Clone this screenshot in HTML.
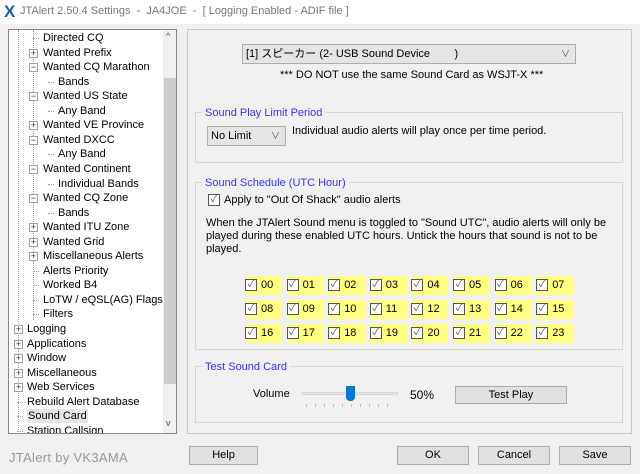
<!DOCTYPE html><html><head><style>
*{margin:0;padding:0;box-sizing:border-box}
body{width:640px;height:474px;background:#f0f0f0;font-family:"Liberation Sans","Noto Sans CJK JP",sans-serif;font-size:11px;color:#000;position:relative;overflow:hidden}
.a{position:absolute;white-space:nowrap}
.tb{position:absolute;left:0;top:0;width:640px;height:24px;background:#fff}
.tree{position:absolute;left:8px;top:29px;width:169px;height:405px;background:#fff;border:1px solid #828790;overflow:hidden}
.sb{position:absolute;left:154px;top:0;width:14px;height:403px;background:#f0f0f0}
.th{position:absolute;left:1px;top:48px;width:12px;height:306px;background:#cdcdcd}
.ti{position:absolute;height:14px;line-height:14px}
.pb{position:absolute;width:9px;height:9px;border:1px solid #a0a0a0;background:#fff;font-size:9px;line-height:7px;text-align:center;color:#333}
.grp{position:absolute;border:1px solid #d5d5d5}
.gl{position:absolute;background:#f0f0f0;color:#3333ff;padding:0 3px;font-size:11px}
.btn{position:absolute;border:1px solid #adadad;background:#e1e1e1;text-align:center;line-height:17px}
.cell{position:absolute;width:37px;height:19px;background:#ffff80;font-size:11px;line-height:19px}
.cb{position:absolute;width:12px;height:12px;border:1px solid #555;background:#fff;font-size:10px;line-height:10px;text-align:center;color:#555}
.dl{position:absolute;border-left:1px dotted #a0a0a0}
.dh{position:absolute;border-top:1px dotted #a0a0a0;width:6px}
</style></head><body>
<div class="tb"></div>
<div class="a" style="left:4px;top:2px;font-size:17px;color:#1a5fb4;font-weight:bold">X</div>
<div class="a" style="left:20px;top:5px;color:#777;font-size:11px">JTAlert 2.50.4 Settings &nbsp;- &nbsp;JA4JOE &nbsp;- &nbsp;[ Logging Enabled - ADIF file ]</div>
<div class="tree">
<div class="dl" style="left:9px;top:0;height:400px"></div>
<div class="dl" style="left:24px;top:0;height:290px"></div>
<div id="items"></div>
<div class="sb"><div class="th"></div><div class="a" style="left:3px;top:1px;font-size:9px;color:#555">^</div><div class="a" style="left:3px;top:388px;font-size:9px;color:#555">v</div></div>
</div>
<script>
var it=[[2,"Directed CQ",0],[2,"Wanted Prefix","+"],[2,"Wanted CQ Marathon","-"],[3,"Bands",0],[2,"Wanted US State","-"],[3,"Any Band",0],[2,"Wanted VE Province","+"],[2,"Wanted DXCC","-"],[3,"Any Band",0],[2,"Wanted Continent","-"],[3,"Individual Bands",0],[2,"Wanted CQ Zone","-"],[3,"Bands",0],[2,"Wanted ITU Zone","+"],[2,"Wanted Grid","+"],[2,"Miscellaneous Alerts","+"],[2,"Alerts Priority",0],[2,"Worked B4",0],[2,"LoTW / eQSL(AG) Flags",0],[2,"Filters",0],[1,"Logging","+"],[1,"Applications","+"],[1,"Window","+"],[1,"Miscellaneous","+"],[1,"Web Services","+"],[1,"Rebuild Alert Database",0],[1,"Sound Card",0],[1,"Station Callsign",0]];
var h="";
for(var i=0;i<it.length;i++){var y=1+i*14.55,l=it[i][0];var x=(l==1?27:l==2?43:58)-9;
var bx=(l==1?14:l==2?29:0)-9;
if(it[i][2])h+='<div class="pb" style="left:'+bx+'px;top:'+(y+3)+'px">'+(it[i][2]=="+"?"+":"−")+'</div>';
else h+='<div class="dh" style="left:'+(x-10)+'px;top:'+(y+7)+'px"></div>';
h+='<div class="ti a" style="left:'+x+'px;top:'+y+'px;'+(i==26?'background:#e5e5e5;padding:0 1px;':'')+'">'+it[i][1]+'</div>';}
document.getElementById("items").innerHTML=h;
</script>
<div class="a" style="left:187px;top:29px;width:445px;height:405px;border:1px solid #c8c8c8"></div>
<div class="a" style="left:242px;top:44px;width:334px;height:20px;border:1px solid #adadad;background:#e5e5e5;line-height:18px;padding-left:3px">[1] スピーカー (2- USB Sound Device &nbsp; &nbsp; &nbsp; &nbsp;)<span style="position:absolute;right:5px;color:#555;font-size:9px">&#x2228;</span></div>
<div class="a" style="left:280px;top:69px;">*** DO NOT use the same Sound Card as WSJT-X ***</div>
<div class="grp" style="left:195px;top:112px;width:428px;height:51px"></div>
<div class="gl a" style="left:202px;top:107px">Sound Play Limit Period</div>
<div class="a" style="left:207px;top:126px;width:79px;height:20px;border:1px solid #adadad;background:#e5e5e5;line-height:18px;padding-left:3px">No Limit<span style="position:absolute;right:5px;color:#555;font-size:9px">&#x2228;</span></div>
<div class="a" style="left:292px;top:125px">Individual audio alerts will play once per time period.</div>
<div class="grp" style="left:195px;top:182px;width:428px;height:168px"></div>
<div class="gl a" style="left:202px;top:177px">Sound Schedule (UTC Hour)</div>
<div class="cb" style="left:208px;top:194px">✓</div>
<div class="a" style="left:224px;top:194px">Apply to "Out Of Shack" audio alerts</div>
<div class="a" style="left:206px;top:217px;line-height:13px;white-space:normal;width:410px">When the JTAlert Sound menu is toggled to "Sound UTC", audio alerts will only be played during these enabled UTC hours. Untick the hours that sound is not to be played.</div>
<div id="g"></div>
<script>
var s="";for(var r=0;r<3;r++)for(var c=0;c<8;c++){var n=r*8+c;var x=245+c*41.6,y=276+r*24.2;
s+='<div class="cell" style="left:'+x+'px;top:'+y+'px"><div class="cb" style="left:0;top:3px">✓</div><span style="position:absolute;left:16px">'+(n<10?"0":"")+n+'</span></div>';}
document.getElementById("g").innerHTML=s;
</script>
<div class="grp" style="left:195px;top:366px;width:428px;height:57px"></div>
<div class="gl a" style="left:202px;top:361px">Test Sound Card</div>
<div class="a" style="left:253px;top:388px">Volume</div>
<div class="a" style="left:302px;top:392px;width:96px;height:3px;background:#e7e7e7;border:1px solid #d6d6d6"></div>
<div class="a" style="left:346px;top:386px;width:9px;height:15px;background:#0078d7;border-radius:0 0 4px 4px"></div>
<div class="a" style="left:306px;top:404px;width:90px;height:3px;background:repeating-linear-gradient(90deg,#bbb 0 1px,transparent 1px 9px)"></div>
<div class="a" style="left:410px;top:388px;font-size:12px">50%</div>
<div class="btn" style="left:455px;top:386px;width:112px;height:18px">Test Play</div>
<div class="a" style="left:9px;top:450px;color:#999;font-size:13px;letter-spacing:0.3px">JTAlert by VK3AMA</div>
<div class="btn" style="left:189px;top:446px;width:69px;height:19px">Help</div>
<div class="btn" style="left:397px;top:446px;width:72px;height:19px">OK</div>
<div class="btn" style="left:478px;top:446px;width:72px;height:19px">Cancel</div>
<div class="btn" style="left:559px;top:446px;width:72px;height:19px">Save</div>
</body></html>
